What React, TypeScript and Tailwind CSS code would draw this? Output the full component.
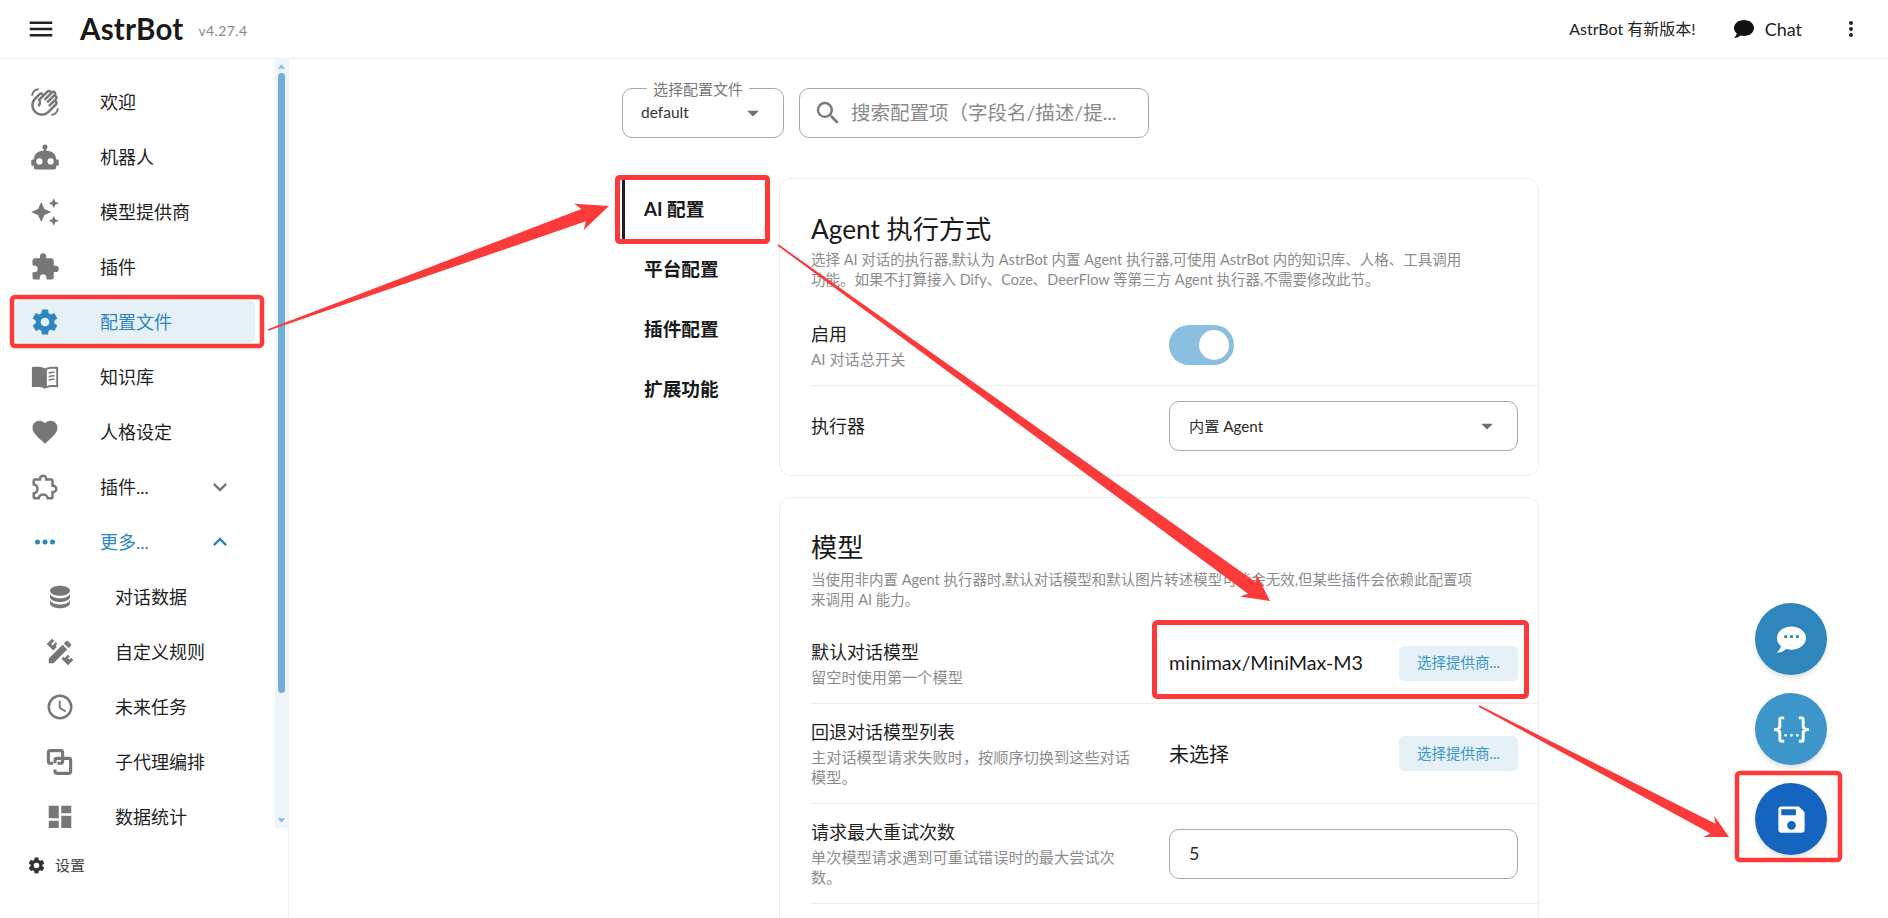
import { MdOutlineWavingHand } from 'react-icons/md';

const P = {
  menu: 'M3,6H21V8H3V6M3,11H21V13H3V11M3,16H21V18H3V16Z',
  robot: 'M12,2A2,2 0 0,1 14,4C14,4.74 13.6,5.39 13,5.73V7H14A7,7 0 0,1 21,14H22A1,1 0 0,1 23,15V18A1,1 0 0,1 22,19H21V20A2,2 0 0,1 19,22H5A2,2 0 0,1 3,20V19H2A1,1 0 0,1 1,18V15A1,1 0 0,1 2,14H3A7,7 0 0,1 10,7H11V5.73C10.4,5.39 10,4.74 10,4A2,2 0 0,1 12,2M7.5,13A2.5,2.5 0 0,0 5,15.5A2.5,2.5 0 0,0 7.5,18A2.5,2.5 0 0,0 10,15.5A2.5,2.5 0 0,0 7.5,13M16.5,13A2.5,2.5 0 0,0 14,15.5A2.5,2.5 0 0,0 16.5,18A2.5,2.5 0 0,0 19,15.5A2.5,2.5 0 0,0 16.5,13Z',
  creation: 'M19,1L17.74,3.75L15,5L17.74,6.26L19,9L20.25,6.26L23,5L20.25,3.75M9,4L6.5,9.5L1,12L6.5,14.5L9,20L11.5,14.5L17,12L11.5,9.5M19,15L17.74,17.74L15,19L17.74,20.25L19,23L20.25,20.25L23,19L20.25,17.74',
  puzzle: 'M20.5,11H19V7C19,5.89 18.1,5 17,5H13V3.5A2.5,2.5 0 0,0 10.5,1A2.5,2.5 0 0,0 8,3.5V5H4A2,2 0 0,0 2,7V10.8H3.5C5,10.8 6.2,12 6.2,13.5C6.2,15 5,16.2 3.5,16.2H2V20A2,2 0 0,0 4,22H7.8V20.5C7.8,19 9,17.8 10.5,17.8C12,17.8 13.2,19 13.2,20.5V22H17A2,2 0 0,0 19,20V16H20.5A2.5,2.5 0 0,0 23,13.5A2.5,2.5 0 0,0 20.5,11Z',
  puzzleOutline: 'M22,13.5C22,15.26 20.7,16.72 19,16.96V20A2,2 0 0,1 17,22H13.2V21.7A2.7,2.7 0 0,0 10.5,19C9,19 7.8,20.21 7.8,21.7V22H4A2,2 0 0,1 2,20V16.2H2.3C3.79,16.2 5,15 5,13.5C5,12 3.79,10.8 2.3,10.8H2V7A2,2 0 0,1 4,5H7.04C7.28,3.3 8.74,2 10.5,2C12.26,2 13.72,3.3 13.96,5H17A2,2 0 0,1 19,7V10.04C20.7,10.28 22,11.74 22,13.5M17,15H18.5A1.5,1.5 0 0,0 20,13.5A1.5,1.5 0 0,0 18.5,12H17V7H12V5.5A1.5,1.5 0 0,0 10.5,4A1.5,1.5 0 0,0 9,5.5V7H4V9.12C5.76,9.8 7,11.5 7,13.5C7,15.5 5.75,17.2 4,17.88V20H6.12C6.8,18.25 8.5,17 10.5,17C12.5,17 14.2,18.25 14.88,20H17V15Z',
  cog: 'M12,15.5A3.5,3.5 0 0,1 8.5,12A3.5,3.5 0 0,1 12,8.5A3.5,3.5 0 0,1 15.5,12A3.5,3.5 0 0,1 12,15.5M19.43,12.97C19.47,12.65 19.5,12.33 19.5,12C19.5,11.67 19.47,11.34 19.43,11L21.54,9.37C21.73,9.22 21.78,8.95 21.66,8.73L19.66,5.27C19.54,5.05 19.27,4.96 19.05,5.05L16.56,6.05C16.04,5.66 15.5,5.32 14.87,5.07L14.5,2.42C14.46,2.18 14.25,2 14,2H10C9.75,2 9.54,2.18 9.5,2.42L9.13,5.07C8.5,5.32 7.96,5.66 7.44,6.05L4.95,5.05C4.73,4.96 4.46,5.05 4.34,5.27L2.34,8.73C2.21,8.95 2.27,9.22 2.46,9.37L4.57,11C4.53,11.34 4.5,11.67 4.5,12C4.5,12.33 4.53,12.65 4.57,12.97L2.46,14.63C2.27,14.78 2.21,15.05 2.34,15.27L4.34,18.73C4.46,18.95 4.73,19.03 4.95,18.95L7.44,17.94C7.96,18.34 8.5,18.68 9.13,18.93L9.5,21.58C9.54,21.82 9.75,22 10,22H14C14.25,22 14.46,21.82 14.5,21.58L14.87,18.93C15.5,18.67 16.04,18.34 16.56,17.94L19.05,18.95C19.27,19.03 19.54,18.95 19.66,18.73L21.66,15.27C21.78,15.05 21.73,14.78 21.54,14.63L19.43,12.97Z',
  book: 'M12,5.2C10,3.9 6.8,3.5 1.5,4V20.2C6.8,19.7 10,20 12,21.3C14,20 17.2,19.7 22.5,20.2V4C17.2,3.5 14,3.9 12,5.2ZM13.5,6.3C15,5.6 17.5,5.3 21,5.6V18.6C17.5,18.3 15,18.6 13.5,19.3ZM15,8.2V9.5C16.5,9 18,8.8 19.6,8.9V7.6C18,7.5 16.5,7.7 15,8.2ZM15,11V12.3C16.5,11.8 18,11.6 19.6,11.7V10.4C18,10.3 16.5,10.5 15,11ZM15,13.8V15.1C16.5,14.6 18,14.4 19.6,14.5V13.2C18,13.1 16.5,13.3 15,13.8Z',
  heart: 'M12,21.35L10.55,20.03C5.4,15.36 2,12.27 2,8.5C2,5.41 4.42,3 7.5,3C9.24,3 10.91,3.81 12,5.08C13.09,3.81 14.76,3 16.5,3C19.58,3 22,5.41 22,8.5C22,12.27 18.6,15.36 13.45,20.03L12,21.35Z',
  dots: 'M16,12A2,2 0 0,1 18,10A2,2 0 0,1 20,12A2,2 0 0,1 18,14A2,2 0 0,1 16,12M10,12A2,2 0 0,1 12,10A2,2 0 0,1 14,12A2,2 0 0,1 12,14A2,2 0 0,1 10,12M4,12A2,2 0 0,1 6,10A2,2 0 0,1 8,12A2,2 0 0,1 6,14A2,2 0 0,1 4,12Z',
  chevronDown: 'M7.41,8.58L12,13.17L16.59,8.58L18,10L12,16L6,10L7.41,8.58Z',
  chevronUp: 'M7.41,15.41L12,10.83L16.59,15.41L18,14L12,8L6,14L7.41,15.41Z',
  database: 'M12,3C7.58,3 4,4.79 4,7C4,9.21 7.58,11 12,11C16.42,11 20,9.21 20,7C20,4.79 16.42,3 12,3M4,9V12C4,14.21 7.58,16 12,16C16.42,16 20,14.21 20,12V9C20,11.21 16.42,13 12,13C7.58,13 4,11.21 4,9M4,14V17C4,19.21 7.58,21 12,21C16.42,21 20,19.21 20,17V14C20,16.21 16.42,18 12,18C7.58,18 4,16.21 4,14Z',
  pencilRuler: 'M3 17.25V21H6.75L17.81 9.93L14.06 6.18L3 17.25M22.61 18.36L18.36 22.61L13.16 17.41L14.93 15.64L15.93 16.64L18.4 14.16L19.82 15.58L18.36 17L19.42 18L20.84 16.6L22.61 18.36M6.61 10.83L1.39 5.64L5.64 1.39L7.4 3.16L4.93 5.64L6 6.7L8.46 4.22L9.88 5.64L8.46 7.05L9.46 8.05L6.61 10.83M20.71 7C21.1 6.61 21.1 6 20.71 5.59L18.37 3.29C18 2.9 17.35 2.9 16.96 3.29L15.12 5.12L18.87 8.87L20.71 7Z',
  clock: 'M12,20A8,8 0 0,0 20,12A8,8 0 0,0 12,4A8,8 0 0,0 4,12A8,8 0 0,0 12,20M12,2A10,10 0 0,1 22,12A10,10 0 0,1 12,22C6.47,22 2,17.5 2,12A10,10 0 0,1 12,2M12.5,7V12.25L17,14.92L16.25,16.15L11,13V7H12.5Z',
  dashboard: 'M13,3V9H21V3M13,21H21V11H13M3,21H11V15H3M3,13H11V3H3V13Z',
  save: 'M15,9H5V5H15M12,19A3,3 0 0,1 9,16A3,3 0 0,1 12,13A3,3 0 0,1 15,16A3,3 0 0,1 12,19M17,3H5C3.89,3 3,3.9 3,5V19A2,2 0 0,0 5,21H19A2,2 0 0,0 21,19V7L17,3Z',
  json: 'M5,3H7V5H5V10A2,2 0 0,1 3,12A2,2 0 0,1 5,14V19H7V21H5C3.93,20.73 3,20.1 3,19V15A2,2 0 0,0 1,13H0V11H1A2,2 0 0,0 3,9V5A2,2 0 0,1 5,3M19,3A2,2 0 0,1 21,5V9A2,2 0 0,0 23,11H24V13H23A2,2 0 0,0 21,15V19A2,2 0 0,1 19,21H17V19H19V14A2,2 0 0,1 21,12A2,2 0 0,1 19,10V5H17V3H19M12,15A1,1 0 0,1 13,16A1,1 0 0,1 12,17A1,1 0 0,1 11,16A1,1 0 0,1 12,15M8,15A1,1 0 0,1 9,16A1,1 0 0,1 8,17A1,1 0 0,1 7,16A1,1 0 0,1 8,15M16,15A1,1 0 0,1 17,16A1,1 0 0,1 16,17A1,1 0 0,1 15,16A1,1 0 0,1 16,15Z',
  chatDots: 'M17,11H15V9H17M13,11H11V9H13M9,11H7V9H9M12,3C6.5,3 2,6.58 2,11C2.05,13.15 3.06,15.17 4.75,16.5C4.75,17.1 4.33,18.67 2,21C4.37,20.89 6.64,20 8.47,18.5C9.61,18.83 10.81,19 12,19C17.5,19 22,15.42 22,11C22,6.58 17.5,3 12,3Z',
  chat: 'M12,3C17.5,3 22,6.58 22,11C22,15.42 17.5,19 12,19C10.76,19 9.57,18.82 8.47,18.5C5.55,21 2,21 2,21C4.33,18.67 4.7,17.1 4.75,16.5C3.05,15.07 2,13.14 2,11C2,6.58 6.5,3 12,3Z',
  dotsVertical: 'M12,16A2,2 0 0,1 14,18A2,2 0 0,1 12,20A2,2 0 0,1 10,18A2,2 0 0,1 12,16M12,10A2,2 0 0,1 14,12A2,2 0 0,1 12,14A2,2 0 0,1 10,12A2,2 0 0,1 12,10M12,4A2,2 0 0,1 14,6A2,2 0 0,1 12,8A2,2 0 0,1 10,6A2,2 0 0,1 12,4Z',
  magnify: 'M9.5,3A6.5,6.5 0 0,1 16,9.5C16,11.11 15.41,12.59 14.44,13.73L14.71,14H15.5L20.5,19L19,20.5L14,15.5V14.71L13.73,14.44C12.59,15.41 11.11,16 9.5,16A6.5,6.5 0 0,1 3,9.5A6.5,6.5 0 0,1 9.5,3M9.5,5C7,5 5,7 5,9.5C5,12 7,14 9.5,14C12,14 14,12 14,9.5C14,7 12,5 9.5,5Z',
  caret: 'M7,10L12,15L17,10H7Z',
};

function Mdi({ d, className }: { d: string; className: string }) {
  return (
    <svg viewBox="0 0 24 24" fill="currentColor" className={className}>
      <path d={d} />
    </svg>
  );
}

// two linked squares, no stock icon has this shape
function SubAgentIcon() {
  return (
    <svg viewBox="0 0 24 24" fill="none" stroke="currentColor" strokeWidth="2.5" className="size-[30px]">
      <path d="M6.5 13H4.2a1.5 1.5 0 0 1-1.5-1.5V4.4a1.5 1.5 0 0 1 1.5-1.5h8.4a1.5 1.5 0 0 1 1.5 1.5v7.1a1.5 1.5 0 0 1-1.5 1.5H10" />
      <path d="M8 18v1.6a1.5 1.5 0 0 0 1.5 1.5H19a1.5 1.5 0 0 0 1.5-1.5v-9a1.5 1.5 0 0 0-1.5-1.5H9.5A1.5 1.5 0 0 0 8 10.5V13" />
    </svg>
  );
}

const navItems = [
  { label: '欢迎', hand: true },
  { label: '机器人', d: P.robot },
  { label: '模型提供商', d: P.creation },
  { label: '插件', d: P.puzzle },
  { label: '配置文件', d: P.cog, active: true },
  { label: '知识库', d: P.book },
  { label: '人格设定', d: P.heart },
  { label: '插件...', d: P.puzzleOutline, chevron: P.chevronDown },
  { label: '更多...', d: P.dots, chevron: P.chevronUp, open: true },
];

const subItems = [
  { label: '对话数据', d: P.database },
  { label: '自定义规则', d: P.pencilRuler },
  { label: '未来任务', d: P.clock },
  { label: '子代理编排', agent: true },
  { label: '数据统计', d: P.dashboard },
];

function Sidebar() {
  return (
    <aside className="flex h-full w-[289px] shrink-0 flex-col border-r border-[#eeeeee]">
      <div className="flex h-[769px] shrink-0">
        <nav className="flex-1 overflow-hidden pt-[21px]">
          <div className="flex flex-col gap-3">
            {navItems.map((item) => {
              const blue = item.active || item.open;
              return (
                <div
                  key={item.label}
                  className={`ml-[15px] flex h-[43px] w-[240px] shrink-0 items-center rounded-[5px] pl-[15px] ${item.active ? 'bg-[#e6f0f7]' : ''} ${blue ? 'text-[#2e86c1]' : 'text-[#1f1f1f]'}`}
                >
                  <span className={blue ? 'text-[#2e86c1]' : 'text-[#777777]'}>
                    {item.hand ? <MdOutlineWavingHand className="size-[30px]" /> : <Mdi d={item.d!} className="size-[30px]" />}
                  </span>
                  <span className="ml-10 flex-1 text-[18px] leading-6">{item.label}</span>
                  {item.chevron && (
                    <span className={`mr-[21px] ${blue ? 'text-[#2e86c1]' : 'text-[#777777]'}`}>
                      <Mdi d={item.chevron} className="size-7" />
                    </span>
                  )}
                </div>
              );
            })}
            {subItems.map((item) => (
              <div key={item.label} className="ml-[15px] flex h-[43px] w-[240px] shrink-0 items-center pl-[30px] text-[#1f1f1f]">
                <span className="text-[#777777]">
                  {item.agent ? <SubAgentIcon /> : <Mdi d={item.d!} className="size-[30px]" />}
                </span>
                <span className="ml-10 text-[18px] leading-6">{item.label}</span>
              </div>
            ))}
          </div>
        </nav>
        <div className="relative flex w-[13px] flex-col items-center bg-[#eff6fb]">
          <Mdi d="M12,8L19,16H5Z" className="mt-px size-[13px] text-[#8fc0e0]" />
          <div className="absolute top-[14px] h-[620px] w-[7px] rounded-full bg-[#6fafd8]" />
          <Mdi d="M5,8H19L12,16Z" className="mt-auto mb-px size-[13px] text-[#8fc0e0]" />
        </div>
      </div>
      <div className="flex items-center pt-[27px] pl-[27px]">
        <Mdi d={P.cog} className="size-[19px] text-[#333333]" />
        <span className="ml-[9px] text-[15px] leading-5 text-[#444444]">设置</span>
      </div>
    </aside>
  );
}

function Header() {
  return (
    <header className="flex h-[59px] shrink-0 items-center border-b border-[#eeeeee] pl-[26px]">
      <Mdi d={P.menu} className="size-[30px] text-[#222222]" />
      <span className="ml-6 text-[29.5px] font-bold leading-none tracking-[0.2px] text-[#1a1a1a]">AstrBot</span>
      <span className="mt-[2px] ml-[15px] text-[14px] tracking-[0.4px] text-[#888888]">v4.27.4</span>
      <span className="ml-auto text-[16px] text-[#222222]">AstrBot 有新版本!</span>
      <Mdi d={P.chat} className="ml-[36px] size-6 text-[#111111]" />
      <span className="ml-[9px] text-[18px] text-[#222222]">Chat</span>
      <Mdi d={P.dotsVertical} className="mr-[25px] ml-[37px] size-6 text-[#222222]" />
    </header>
  );
}

function Label({ title, sub }: { title: string; sub?: string }) {
  return (
    <div className="w-[325px]">
      <div className="text-[18px] leading-6 text-[#1f1f1f]">{title}</div>
      {sub && <div className="mt-[3px] text-[15.2px] leading-5 text-[#8c8c8c]">{sub}</div>}
    </div>
  );
}

function Row({ title, sub, h, last, children }: { title: string; sub?: string; h: string; last?: boolean; children: React.ReactNode }) {
  return (
    <div className={`ml-[30px] flex items-center pl-[1px] ${h} ${last ? '' : 'border-b border-[#eeeeee]'}`}>
      <div className="w-[358px] shrink-0">
        <Label title={title} sub={sub} />
      </div>
      <div className="flex w-[349px] items-center">{children}</div>
    </div>
  );
}

function Outlined({ children }: { children: React.ReactNode }) {
  return (
    <div className="flex h-[50px] w-[349px] items-center rounded-[10px] border border-[#a8a8a8] pr-4 pl-[19px] text-[15.2px] text-[#2a2a2a]">
      {children}
    </div>
  );
}

function ProviderButton() {
  return (
    <div className="ml-auto flex h-[35px] w-[119px] items-center justify-center rounded-[5px] bg-[#e6f0f7] text-[14.5px] text-[#3a96cf]">
      选择提供商...
    </div>
  );
}

const tabs = ['平台配置', '插件配置', '扩展功能'];

function Config() {
  return (
    <main className="min-w-0 flex-1 overflow-hidden pl-[333px]">
      <div className="mt-[29px] flex gap-[15px]">
        <div className="relative flex h-[50px] w-[162px] items-center justify-between rounded-[10px] border border-[#a8a8a8] pr-[16px] pl-[18px] text-[15.5px] text-[#333333]">
          <span className="absolute -top-[10px] left-[24px] bg-white px-[6px] text-[15px] leading-5 text-[#777777]">选择配置文件</span>
          <span>default</span>
          <Mdi d={P.caret} className="size-7 text-[#6f6f6f]" />
        </div>
        <div className="flex h-[50px] w-[350px] items-center rounded-[10px] border border-[#a8a8a8] pl-[13px]">
          <Mdi d={P.magnify} className="size-[30px] text-[#7a7a7a]" />
          <span className="ml-2 text-[19.5px] text-[#8a8a8a]">搜索配置项（字段名/描述/提...</span>
        </div>
      </div>

      <div className="mt-10 flex">
        <div className="w-[157px] shrink-0 pt-[2px]">
          <div className="flex h-[59px] items-center border-l-[3px] border-[#1f1f1f] pl-[19px] text-[18.7px] font-bold text-[#1a1a1a]">AI 配置</div>
          {tabs.map((tab) => (
            <div key={tab} className="flex h-[60px] items-center pl-[22px] text-[18.7px] font-bold text-[#1a1a1a]">
              {tab}
            </div>
          ))}
        </div>

        <div className="flex w-[760px] shrink-0 flex-col gap-[21px]">
          <section className="h-[298px] rounded-[12px] border border-[#eeeeee] pt-[34px]">
            <h2 className="pl-[31px] text-[26.2px] leading-8 text-[#1a1a1a]">Agent 执行方式</h2>
            <p className="mt-[5px] pl-[31px] text-[14.5px] leading-5 text-[#8c8c8c]">
              选择 AI 对话的执行器,默认为 AstrBot 内置 Agent 执行器,可使用 AstrBot 内的知识库、人格、工具调用
              <br />
              功能。如果不打算接入 Dify、Coze、DeerFlow 等第三方 Agent 执行器,不需要修改此节。
            </p>
            <div className="mt-[15px]">
              <Row title="启用" sub="AI 对话总开关" h="h-[81px]">
                <div className="relative h-10 w-[65px] rounded-full bg-[#8abfdf]">
                  <div className="absolute top-[5px] right-[5px] size-[30px] rounded-full bg-white" />
                </div>
              </Row>
              <Row title="执行器" h="h-[80px]" last>
                <Outlined>
                  <span className="flex-1">内置 Agent</span>
                  <Mdi d={P.caret} className="size-7 text-[#6f6f6f]" />
                </Outlined>
              </Row>
            </div>
          </section>

          <section className="h-[500px] rounded-t-[12px] border border-[#eeeeee] pt-[33px]">
            <h2 className="pl-[31px] text-[26.2px] leading-8 text-[#1a1a1a]">模型</h2>
            <p className="mt-[7px] pl-[31px] text-[14.5px] leading-5 text-[#8c8c8c]">
              当使用非内置 Agent 执行器时,默认对话模型和默认图片转述模型可能会无效,但某些插件会依赖此配置项
              <br />
              来调用 AI 能力。
            </p>
            <div className="mt-[13px]">
              <Row title="默认对话模型" sub="留空时使用第一个模型" h="h-[81px]">
                <span className="text-[19.7px] text-[#1a1a1a]">minimax/MiniMax-M3</span>
                <ProviderButton />
              </Row>
              <Row title="回退对话模型列表" sub="主对话模型请求失败时，按顺序切换到这些对话模型。" h="h-[100px]">
                <span className="text-[20px] text-[#1a1a1a]">未选择</span>
                <ProviderButton />
              </Row>
              <Row title="请求最大重试次数" sub="单次模型请求遇到可重试错误时的最大尝试次数。" h="h-[100px]">
                <Outlined>
                  <span className="text-[18px]">5</span>
                </Outlined>
              </Row>
            </div>
          </section>
        </div>
      </div>
    </main>
  );
}

function Fabs() {
  return (
    <div className="absolute top-[603px] right-[61px] flex flex-col gap-[18px]">
      <div className="flex size-[72px] items-center justify-center rounded-full bg-[#2e86bb] text-white shadow-md">
        <Mdi d={P.chatDots} className="size-[35px]" />
      </div>
      <div className="flex size-[72px] items-center justify-center rounded-full bg-[#3d96c9] text-white shadow-md">
        <Mdi d={P.json} className="size-[35px]" />
      </div>
      <div className="flex size-[72px] items-center justify-center rounded-full bg-[#1565c0] text-white shadow-md">
        <Mdi d={P.save} className="size-[35px]" />
      </div>
    </div>
  );
}

// tapered annotation arrow, thin at the tail
function arrowPoints(x1: number, y1: number, x2: number, y2: number, head: number, barb: number, neck: number) {
  const len = Math.hypot(x2 - x1, y2 - y1);
  const ux = (x2 - x1) / len;
  const uy = (y2 - y1) / len;
  const nx = -uy;
  const ny = ux;
  const bx = x2 - ux * head;
  const by = y2 - uy * head;
  const nkx = x2 - ux * (head - 5);
  const nky = y2 - uy * (head - 5);
  const pts = [
    [x1 + nx * 0.8, y1 + ny * 0.8],
    [nkx + nx * neck, nky + ny * neck],
    [bx + nx * barb, by + ny * barb],
    [x2, y2],
    [bx - nx * barb, by - ny * barb],
    [nkx - nx * neck, nky - ny * neck],
    [x1 - nx * 0.8, y1 - ny * 0.8],
  ];
  return pts.map((p) => p.join(',')).join(' ');
}

function Annotations() {
  return (
    <svg className="pointer-events-none absolute inset-0" width="1888" height="918" viewBox="0 0 1888 918">
      <g fill="none" stroke="#fc3a3a" strokeLinejoin="round">
        <rect x="12" y="297" width="250" height="49" rx="3" strokeWidth="4.5" />
        <rect x="617.5" y="177.5" width="150" height="64" rx="2" strokeWidth="5" />
        <rect x="1154.5" y="622.5" width="372" height="74" rx="3" strokeWidth="5" />
        <rect x="1737" y="773" width="103" height="87" rx="3" strokeWidth="4.5" />
      </g>
      <g fill="#fc3a3a">
        <polygon points={arrowPoints(268, 330, 609, 206, 32, 14, 6.5)} />
        <polygon points={arrowPoints(778, 245, 1270, 601, 27, 14, 7)} />
        <polygon points={arrowPoints(1479, 706, 1729, 837, 23, 12, 5.5)} />
      </g>
    </svg>
  );
}

export default function App() {
  return (
    <div className="relative flex h-[918px] w-[1888px] flex-col overflow-hidden bg-white [font-family:Lato,'Noto_Sans_CJK_SC',sans-serif]">
      <Header />
      <div className="flex min-h-0 flex-1">
        <Sidebar />
        <Config />
      </div>
      <Fabs />
      <Annotations />
    </div>
  );
}
